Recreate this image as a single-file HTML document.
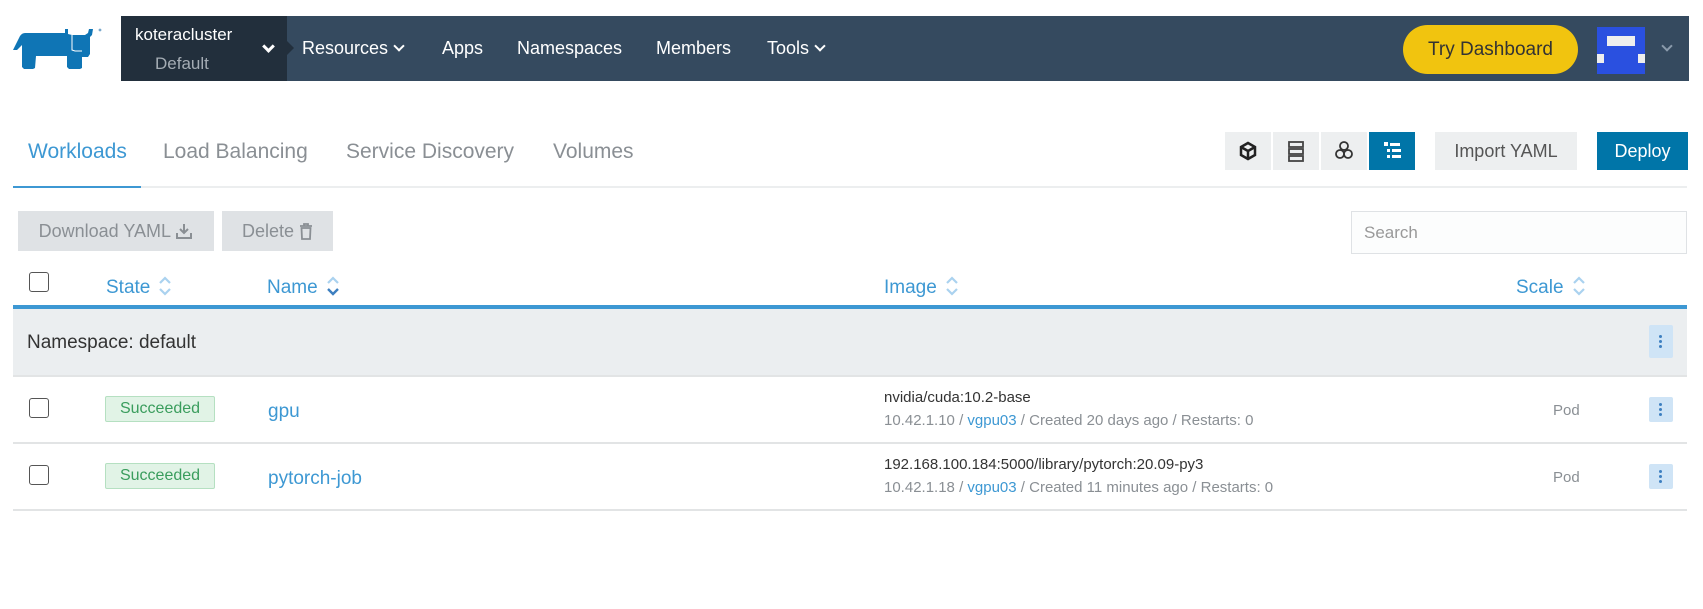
<!DOCTYPE html>
<html><head><meta charset="utf-8"><style>
*{box-sizing:border-box;margin:0;padding:0}
body{width:1703px;height:609px;background:#fff;font-family:"Liberation Sans",sans-serif;position:relative;overflow:hidden;color:#333}
.a{position:absolute;white-space:nowrap}
.nav{left:121px;top:16px;width:1568px;height:65px;background:#354a5f}
.cl{left:121px;top:16px;width:166px;height:65px;background:#222f3c}
.nt{color:#fff;font-size:18px;top:38px}
.chev{display:inline-block;width:8px;height:8px;border-right:2px solid #fff;border-bottom:2px solid #fff;transform:rotate(45deg);margin-left:7px;position:relative;top:-4px}
.tab{font-size:21px;color:#8a8f94;top:140px}
.ib{top:132px;width:46px;height:38px;background:#edeff0}
.btn{background:#e8eaec;color:#555;font-size:18px;text-align:center}
.th{top:275px;font-size:19px;color:#3d98d3}
.sort{display:inline-block;margin-left:8px;vertical-align:-4px}
.cb{width:20px;height:20px;border:1.5px solid #555;border-radius:3px;background:#fff}
.badge{width:110px;height:26px;background:#e1f3e6;border:1px solid #b5e0c1;color:#3a9d5d;font-size:16px;text-align:center;line-height:24px;border-radius:2px}
.keb{width:24px;height:25px;background:#cfe4f6;border-radius:2px}
.keb i{position:absolute;left:10px;width:3px;height:3px;background:#3d7fc0;border-radius:50%}
.line{left:13px;width:1674px;height:2px;background:#e2e4e5}
</style></head><body>
<svg class="a" style="left:0;top:0" width="120" height="80" viewBox="0 0 120 80"><path d="M13 50 L20 36 Q22 33 25 33 L65 33 L65 29 L68 29 L68 34 L72 35 L85 35 L88 33 L89 29 L93 29 L92 35 L90 37 L90 54 L88 57 L82 57 L82 68 L80 69 L69 69 L67 67 L67 56 L36 56 L35 68 L33 69 L24 69 L22 67 L22 45 L17 50 Z" fill="#0f75b5"/><path d="M72 35 L72 50 L75 51 L82 51" stroke="#fff" stroke-width="1" fill="none"/><circle cx="100" cy="30" r="1.4" fill="#7aa9cc"/></svg>
<div class="a nav"></div>
<div class="a cl"></div>
<div class="a" style="left:135px;top:25px;color:#fff;font-size:17px">koteracluster</div>
<div class="a" style="left:155px;top:54px;color:#a4acb4;font-size:17px">Default</div>
<div class="a" style="left:257px;top:42px"><span class="chev" style="width:9px;height:9px;border-width:3px"></span></div>
<div class="a" style="left:287px;top:41px;width:0;height:0;border-top:7px solid transparent;border-bottom:7px solid transparent;border-left:7px solid #222f3c"></div>
<div class="a nt" style="left:302px">Resources<span class="chev"></span></div>
<div class="a nt" style="left:442px">Apps</div>
<div class="a nt" style="left:517px">Namespaces</div>
<div class="a nt" style="left:656px">Members</div>
<div class="a nt" style="left:767px">Tools<span class="chev"></span></div>
<div class="a" style="left:1403px;top:25px;width:175px;height:49px;background:#f1c40f;border-radius:25px;color:#333;font-size:19px;text-align:center;line-height:49px">Try Dashboard</div>
<div class="a" style="left:1597px;top:27px;width:48px;height:47px;background:#2a50e0"></div>
<div class="a" style="left:1607px;top:36px;width:28px;height:10px;background:#eee"></div>
<div class="a" style="left:1597px;top:54px;width:7px;height:9px;background:#eee"></div>
<div class="a" style="left:1638px;top:54px;width:7px;height:9px;background:#eee"></div>
<div class="a" style="left:1656px;top:41px"><span class="chev" style="border-color:#8a9aab"></span></div>

<div class="a tab" style="left:28px;color:#3d98d3">Workloads</div>
<div class="a tab" style="left:163px">Load Balancing</div>
<div class="a tab" style="left:346px">Service Discovery</div>
<div class="a tab" style="left:553px">Volumes</div>
<div class="a" style="left:13px;top:186px;width:1674px;height:2px;background:#eceeef"></div>
<div class="a" style="left:13px;top:186px;width:128px;height:2px;background:#3d98d3"></div>

<div class="a ib" style="left:1225px"><svg width="46" height="38"><path d="M23 11 L30 15 L30 23 L23 27 L16 23 L16 15 Z M16 15 L23 19 L30 15 M23 19 L23 27" stroke="#222" stroke-width="2.5" fill="none"/></svg></div>
<div class="a ib" style="left:1273px"><svg width="46" height="38"><rect x="16" y="10" width="14" height="5" fill="none" stroke="#444" stroke-width="1.8"/><rect x="16" y="17" width="14" height="5" fill="none" stroke="#444" stroke-width="1.8"/><rect x="16" y="24" width="14" height="5" fill="none" stroke="#444" stroke-width="1.8"/></svg></div>
<div class="a ib" style="left:1321px"><svg width="46" height="38"><circle cx="23" cy="14" r="4" fill="none" stroke="#333" stroke-width="1.8"/><circle cx="19" cy="22" r="4" fill="none" stroke="#333" stroke-width="1.8"/><circle cx="27" cy="22" r="4" fill="none" stroke="#333" stroke-width="1.8"/></svg></div>
<div class="a ib" style="left:1369px;background:#0075a8"><svg width="46" height="38"><g fill="#fff"><rect x="15" y="10" width="4" height="4"/><rect x="21" y="11" width="10" height="3"/><rect x="18" y="17" width="3" height="3"/><rect x="23" y="17" width="9" height="3"/><rect x="18" y="23" width="3" height="3"/><rect x="23" y="23" width="9" height="3"/></g></svg></div>
<div class="a btn" style="left:1435px;top:132px;width:142px;height:38px;line-height:38px;background:#edeff0">Import YAML</div>
<div class="a btn" style="left:1597px;top:132px;width:91px;height:38px;line-height:38px;background:#0075a8;color:#fff">Deploy</div>

<div class="a btn" style="left:18px;top:211px;width:196px;height:40px;line-height:40px;color:#8a8f94;background:#dfe2e5">Download YAML <svg width="18" height="18" viewBox="0 0 18 18" style="vertical-align:-3px"><path d="M9 2 V11 M5 7 L9 11 L13 7 M2 11 V16 H16 V11" stroke="#8a8f94" stroke-width="2" fill="none"/></svg></div>
<div class="a btn" style="left:222px;top:211px;width:111px;height:40px;line-height:40px;color:#8a8f94;background:#dfe2e5">Delete <svg width="14" height="18" viewBox="0 0 14 18" style="vertical-align:-3px"><path d="M1 4 H13 M5 4 V2 H9 V4 M2.5 6 H11.5 L11 17 H3 Z" stroke="#8a8f94" stroke-width="1.8" fill="none"/></svg></div>
<div class="a" style="left:1351px;top:211px;width:336px;height:43px;border:1px solid #dfe2e5;background:#fcfdfd;color:#999;font-size:17px;line-height:41px;padding-left:12px">Search</div>

<div class="a cb" style="left:29px;top:272px"></div>
<div class="a th" style="left:106px">State<svg class="sort" width="14" height="22"><path d="M2 8 L7 3 L12 8 M2 14 L7 19 L12 14" stroke="#aad2ef" stroke-width="2.2" fill="none"/></svg></div>
<div class="a th" style="left:267px">Name<svg class="sort" width="14" height="22"><path d="M2 8 L7 3 L12 8" stroke="#aad2ef" stroke-width="2.2" fill="none"/><path d="M2 14 L7 19 L12 14" stroke="#3d7fc0" stroke-width="2.4" fill="none"/></svg></div>
<div class="a th" style="left:884px">Image<svg class="sort" width="14" height="22"><path d="M2 8 L7 3 L12 8 M2 14 L7 19 L12 14" stroke="#aad2ef" stroke-width="2.2" fill="none"/></svg></div>
<div class="a th" style="left:1516px">Scale<svg class="sort" width="14" height="22"><path d="M2 8 L7 3 L12 8 M2 14 L7 19 L12 14" stroke="#aad2ef" stroke-width="2.2" fill="none"/></svg></div>

<div class="a" style="left:13px;top:305px;width:1674px;height:4px;background:#3d98d3"></div>
<div class="a" style="left:13px;top:309px;width:1674px;height:67px;background:#ebeef0"></div>
<div class="a" style="left:27px;top:332px;font-size:19px;color:#333">Namespace: default</div>
<div class="a keb" style="left:1649px;top:325px;height:33px"><i style="top:10px"></i><i style="top:15px"></i><i style="top:20px"></i></div>
<div class="a line" style="top:375px"></div>

<div class="a cb" style="left:29px;top:398px"></div>
<div class="a badge" style="left:105px;top:396px">Succeeded</div>
<div class="a" style="left:268px;top:401px;font-size:19px;color:#3d98d3">gpu</div>
<div class="a" style="left:884px;top:389px;font-size:15px;color:#333">nvidia/cuda:10.2-base</div>
<div class="a" style="left:884px;top:412px;font-size:15px;color:#8a8f94">10.42.1.10 / <span style="color:#3d98d3">vgpu03</span> / Created 20 days ago / Restarts: 0</div>
<div class="a" style="left:1553px;top:402px;font-size:15px;color:#8a8f94">Pod</div>
<div class="a keb" style="left:1649px;top:397px"><i style="top:6px"></i><i style="top:11px"></i><i style="top:16px"></i></div>
<div class="a line" style="top:442px"></div>

<div class="a cb" style="left:29px;top:465px"></div>
<div class="a badge" style="left:105px;top:463px">Succeeded</div>
<div class="a" style="left:268px;top:468px;font-size:19px;color:#3d98d3">pytorch-job</div>
<div class="a" style="left:884px;top:456px;font-size:15px;color:#333">192.168.100.184:5000/library/pytorch:20.09-py3</div>
<div class="a" style="left:884px;top:479px;font-size:15px;color:#8a8f94">10.42.1.18 / <span style="color:#3d98d3">vgpu03</span> / Created 11 minutes ago / Restarts: 0</div>
<div class="a" style="left:1553px;top:469px;font-size:15px;color:#8a8f94">Pod</div>
<div class="a keb" style="left:1649px;top:464px"><i style="top:6px"></i><i style="top:11px"></i><i style="top:16px"></i></div>
<div class="a line" style="top:509px"></div>
</body></html>
